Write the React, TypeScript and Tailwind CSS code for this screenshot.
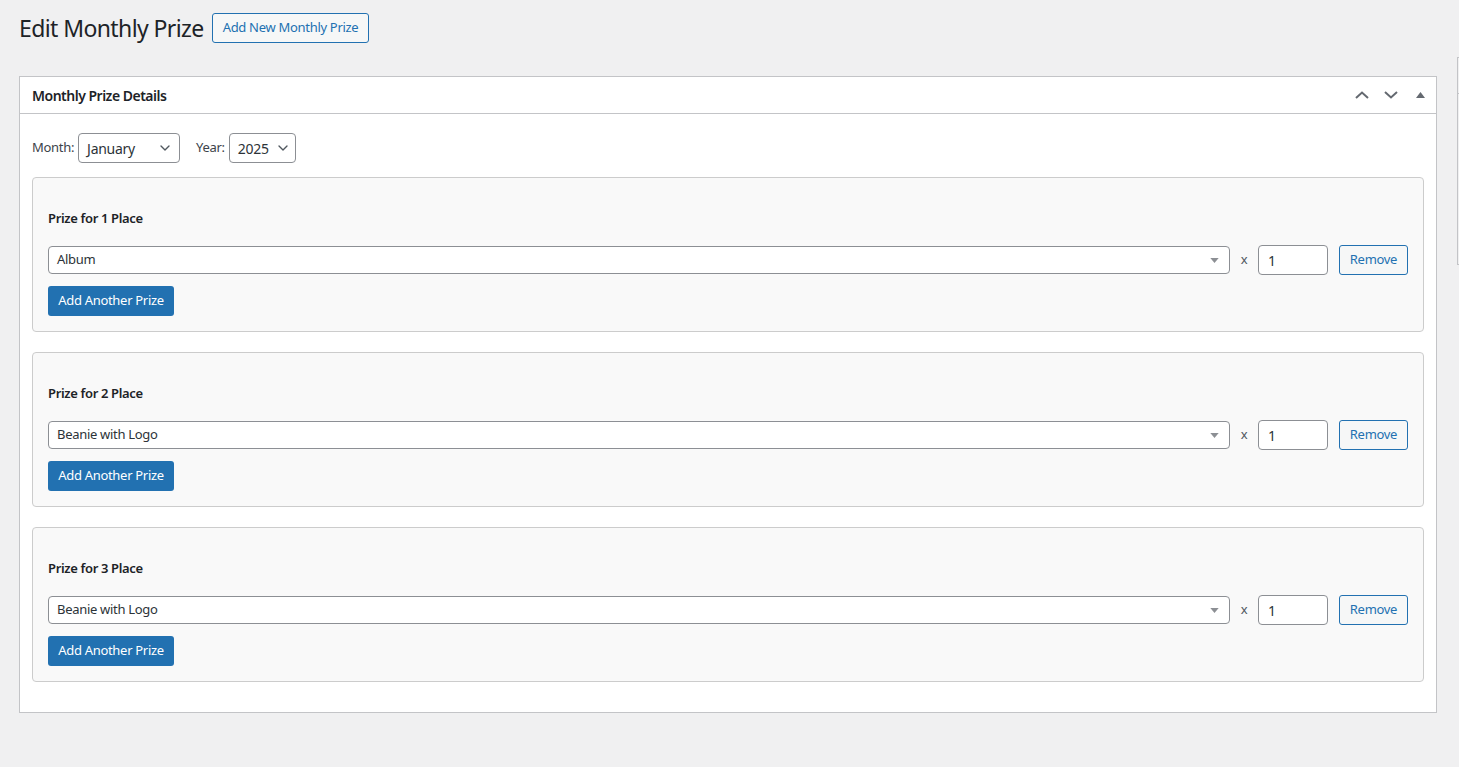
import { ChevronDown } from 'lucide-react';

/* ─── Data ─────────────────────────────────────────────────── */

interface PrizeRow {
  name: string;
  qty: number;
}

interface PlaceGroup {
  place: number;
  rows: PrizeRow[];
}

const places: PlaceGroup[] = [
  { place: 1, rows: [{ name: 'Album', qty: 1 }] },
  { place: 2, rows: [{ name: 'Beanie with Logo', qty: 1 }] },
  { place: 3, rows: [{ name: 'Beanie with Logo', qty: 1 }] },
];

const font = { fontFamily: '"Noto Sans", "Open Sans", sans-serif' };

/* ─── Small pieces ─────────────────────────────────────────── */

function DropSelect({ value, width, pad }: { value: string; width: string; pad: string }) {
  return (
    <div
      className={`flex h-[30px] items-center justify-between rounded-[4px] border border-[#8c8f94] bg-white pl-[8px] text-[14px] text-[#2c3338] ${width} ${pad}`}
    >
      <span>{value}</span>
      <ChevronDown size={16} strokeWidth={2} className="text-[#50575e]" />
    </div>
  );
}

function PrizeLine({ row }: { row: PrizeRow }) {
  return (
    <div className="flex items-center">
      <div className="flex h-[28px] flex-1 items-center justify-between rounded-[4px] border border-[#8c8f94] bg-white pl-[8px] pr-[8px] text-[13px] text-[#2c3338]">
        <span>{row.name}</span>
        <svg width="9" height="5" viewBox="0 0 10 6" className="mr-[2px]">
          <path d="M0 0 L10 0 L5 6 Z" fill="#8c8f94" />
        </svg>
      </div>
      <span className="w-[28px] text-center text-[13px] text-[#50575e]">x</span>
      <div className="flex h-[30px] w-[70px] items-center rounded-[4px] border border-[#8c8f94] bg-white pl-[9px] text-[14px] text-[#2c3338]">
        {row.qty}
      </div>
      <button className="ml-[11px] h-[30px] w-[69px] rounded-[3px] border border-[#2271b1] bg-[#f6f7f7] text-[13px] text-[#2271b1]">
        Remove
      </button>
    </div>
  );
}

function PlaceBox({ group }: { group: PlaceGroup }) {
  return (
    <div className="rounded-[4px] border border-[#cccccc] bg-[#f9f9f9] px-[15px] pb-[15px] pt-[30px]">
      <h3 className="text-[13px] font-semibold leading-5 tracking-[-0.35px] text-[#1d2327]">
        Prize for {group.place} Place
      </h3>
      <div className="mt-[17px] flex flex-col gap-2">
        {group.rows.map((r, i) => (
          <PrizeLine key={i} row={r} />
        ))}
      </div>
      <button className="mt-[11px] h-[30px] w-[126px] rounded-[3px] bg-[#2271b1] text-[13px] text-white">
        Add Another Prize
      </button>
    </div>
  );
}

/* ─── Page ─────────────────────────────────────────────────── */

export default function App() {
  return (
    <div
      className="relative min-h-[767px] overflow-hidden bg-[#f0f0f1] pl-[19px] tracking-[-0.3px]"
      style={font}
    >
      {/* cut-off sidebar box on the far right */}
      <div className="absolute left-[1457px] top-[57px] h-[208px] w-[200px] border border-[#c3c4c7]">
        <div className="h-[36px] border-b border-[#c3c4c7]" />
      </div>

      {/* Heading */}
      <div className="flex items-center gap-[8px] pt-[13px]">
        <h1 className="text-[23px] font-normal leading-[29px] tracking-[-0.6px] text-[#1d2327]">
          Edit Monthly Prize
        </h1>
        <button className="h-[30px] rounded-[3px] border border-[#2271b1] bg-[#f6f7f7] px-[10px] text-[13px] text-[#2271b1]">
          Add New Monthly Prize
        </button>
      </div>

      {/* Postbox */}
      <div className="mt-[33px] w-[1418px] border border-[#c3c4c7] bg-white">
        <div className="flex h-[37px] items-center justify-between border-b border-[#c3c4c7] pl-[12px]">
          <h2 className="text-[14px] font-semibold tracking-[-0.5px] text-[#1d2327]">Monthly Prize Details</h2>
          <div className="flex items-center">
            <div className="flex h-[36px] w-[29px] items-center justify-center">
              <svg width="14" height="8" viewBox="0 0 14 8">
                <path d="M1 7 L7 1.5 L13 7" fill="none" stroke="#646970" strokeWidth="2" />
              </svg>
            </div>
            <div className="flex h-[36px] w-[29px] items-center justify-center">
              <svg width="14" height="8" viewBox="0 0 14 8">
                <path d="M1 1 L7 6.5 L13 1" fill="none" stroke="#646970" strokeWidth="2" />
              </svg>
            </div>
            <div className="flex h-[36px] w-[31px] items-center justify-center">
              <svg width="9" height="6" viewBox="0 0 9 6">
                <path d="M0 6 L4.5 0 L9 6 Z" fill="#646970" />
              </svg>
            </div>
          </div>
        </div>

        <div className="px-[12px] pb-[30px] pt-[19px]">
          <div className="flex items-center text-[13px] text-[#3c434a]">
            <span>Month:</span>
            <div className="ml-[4px]">
              <DropSelect value="January" width="w-[102px]" pad="pr-[6px]" />
            </div>
            <span className="ml-[16px]">Year:</span>
            <div className="ml-[4px]">
              <DropSelect value="2025" width="w-[67px]" pad="pr-[4px]" />
            </div>
          </div>

          <div className="mt-[14px] flex flex-col gap-[20px]">
            {places.map((g) => (
              <PlaceBox key={g.place} group={g} />
            ))}
          </div>
        </div>
      </div>
    </div>
  );
}
